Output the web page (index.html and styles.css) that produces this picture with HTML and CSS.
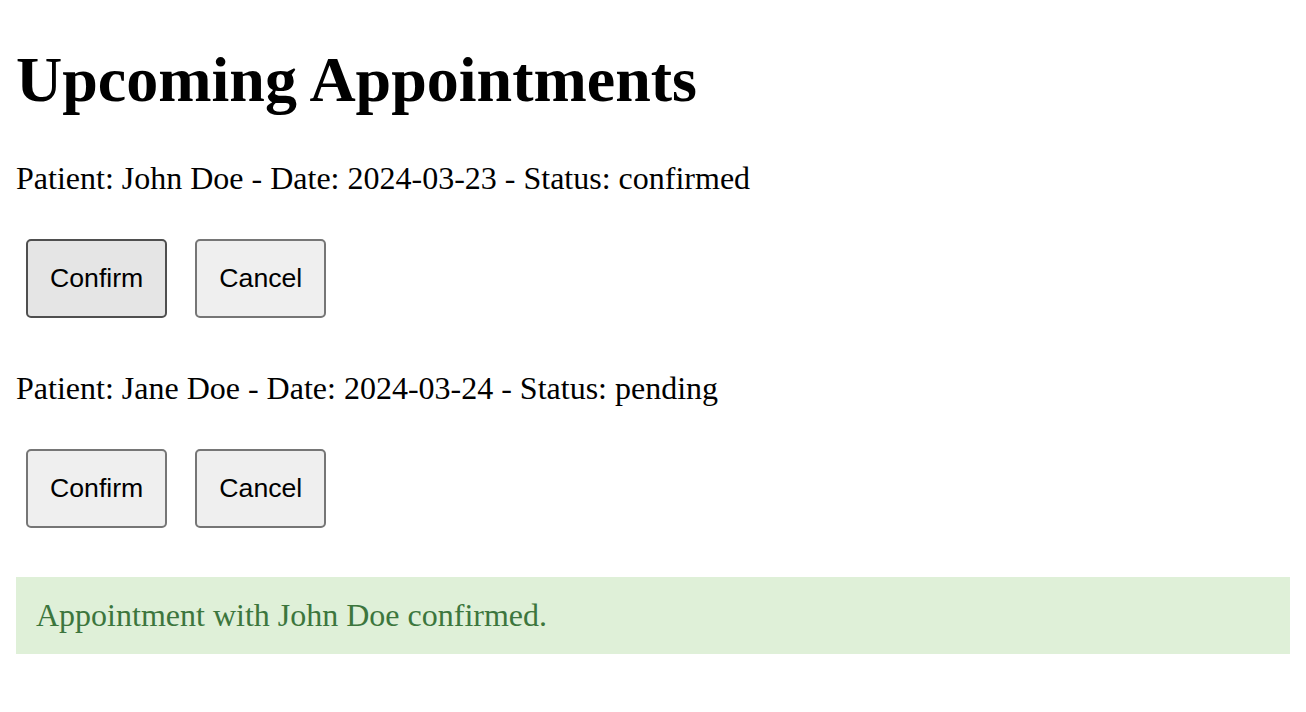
FILE: index.html
```html
<!DOCTYPE html>
<html lang="en">
<head>
<meta charset="utf-8">
<title>Upcoming Appointments</title>
<link rel="stylesheet" href="styles.css">
</head>
<body>
<h1 class="title">Upcoming Appointments</h1>
<div class="appointment">
  <p class="info">Patient: John Doe - Date: 2024-03-23 - Status: confirmed</p>
  <div class="actions">
    <button class="btn is-hover">Confirm</button>
    <button class="btn">Cancel</button>
  </div>
</div>
<div class="appointment">
  <p class="info">Patient: Jane Doe - Date: 2024-03-24 - Status: pending</p>
  <div class="actions">
    <button class="btn">Confirm</button>
    <button class="btn">Cancel</button>
  </div>
</div>
<div class="message">Appointment with John Doe confirmed.</div>
</body>
</html>
```

FILE: styles.css
```css
html {
  background: #ffffff;
  overflow-x: hidden;
}
body {
  margin: 16px;
  font-family: "Liberation Serif", "Times New Roman", serif;
  font-size: 32px;
  color: #000;
}
.title {
  font-size: 64px;
  font-weight: bold;
  margin: 27px 0 42.88px;
}
.info {
  margin: 32px 0;
}
.actions {
  padding-bottom: 10px;
}
.btn {
  font-family: "Liberation Sans", Arial, sans-serif;
  font-size: 26.67px;
  margin: 10px;
  padding: 22px 22px;
  background: #efefef;
  border: 2px solid #767676;
  border-radius: 5px;
  color: #000;
}
.btn.is-hover {
  background: #e5e5e5;
  border-color: #4f4f4f;
}
.message {
  box-sizing: border-box;
  width: calc(100% + 16px);
  margin-top: 29px;
  padding: 20px;
  background: #dff0d8;
  color: #3c763d;
}
```
